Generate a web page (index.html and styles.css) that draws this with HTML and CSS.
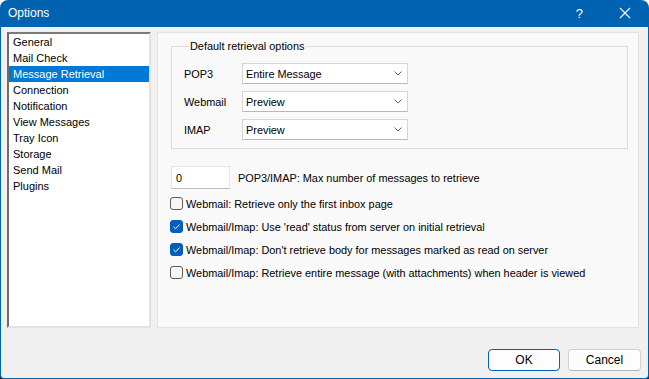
FILE: index.html
```html
<!DOCTYPE html>
<html>
<head>
<meta charset="utf-8">
<link rel="stylesheet" href="styles.css">
</head>
<body>
<div class="window">
  <div class="titlebar">
    <span class="title">Options</span>
    <div class="caption">
      <span class="help">?</span>
      <svg class="close" width="12" height="12" viewBox="0 0 12 12"><path d="M1 1L11 11M11 1L1 11" stroke="#fff" stroke-width="1.1" fill="none"/></svg>
    </div>
  </div>
  <div class="client">
    <div class="main">
      <ul class="nav">
        <li>General</li>
        <li>Mail Check</li>
        <li class="sel">Message Retrieval</li>
        <li>Connection</li>
        <li>Notification</li>
        <li>View Messages</li>
        <li>Tray Icon</li>
        <li>Storage</li>
        <li>Send Mail</li>
        <li>Plugins</li>
      </ul>
      <div class="panel">
        <fieldset class="group">
          <legend>Default retrieval options</legend>
          <div class="row"><span class="lbl">POP3</span><div class="select"><span>Entire Message</span><svg width="8" height="5" viewBox="0 0 8 5"><path d="M0.5 0.5L4 4L7.5 0.5" stroke="#606060" stroke-width="1" fill="none"/></svg></div></div>
          <div class="row"><span class="lbl">Webmail</span><div class="select"><span>Preview</span><svg width="8" height="5" viewBox="0 0 8 5"><path d="M0.5 0.5L4 4L7.5 0.5" stroke="#606060" stroke-width="1" fill="none"/></svg></div></div>
          <div class="row"><span class="lbl">IMAP</span><div class="select"><span>Preview</span><svg width="8" height="5" viewBox="0 0 8 5"><path d="M0.5 0.5L4 4L7.5 0.5" stroke="#606060" stroke-width="1" fill="none"/></svg></div></div>
        </fieldset>
        <div class="maxrow"><div class="textbox">0</div><span>POP3/IMAP: Max number of messages to retrieve</span></div>
        <div class="checks">
          <div class="check"><span class="box"></span><span>Webmail: Retrieve only the first inbox page</span></div>
          <div class="check"><span class="box on"><svg width="13" height="13" viewBox="0 0 13 13"><path d="M3.5 6.8L5.6 8.8L9.6 4.5" stroke="#fff" stroke-width="1" fill="none"/></svg></span><span>Webmail/Imap: Use 'read' status from server on initial retrieval</span></div>
          <div class="check"><span class="box on"><svg width="13" height="13" viewBox="0 0 13 13"><path d="M3.5 6.8L5.6 8.8L9.6 4.5" stroke="#fff" stroke-width="1" fill="none"/></svg></span><span>Webmail/Imap: Don't retrieve body for messages marked as read on server</span></div>
          <div class="check"><span class="box"></span><span>Webmail/Imap: Retrieve entire message (with attachments) when header is viewed</span></div>
        </div>
      </div>
    </div>
    <div class="buttons">
      <div class="btn default">OK</div>
      <div class="btn">Cancel</div>
    </div>
  </div>
</div>
</body>
</html>
```
FILE: styles.css
```css
* { box-sizing: border-box; }
html, body { margin: 0; padding: 0; }
body {
  width: 649px;
  height: 379px;
  background: linear-gradient(#ffffff 50%, #1e1e1e 50%);
  font-family: "Liberation Sans", Arial, sans-serif;
  font-size: 10.9px;
  color: #000;
  overflow: hidden;
}
.window {
  width: 649px;
  height: 379px;
  display: flex;
  flex-direction: column;
  border-radius: 8px 8px 4px 4px;
  overflow: hidden;
  background: #0063b1;
}
.titlebar {
  height: 27px;
  flex: none;
  display: flex;
  align-items: center;
  color: #fff;
  padding-left: 8px;
  padding-bottom: 1px;
}
.title { font-size: 12px; }
.caption {
  margin-left: auto;
  display: flex;
  align-items: center;
}
.help { font-size: 13px; margin-right: 36px; }
.close { margin-right: 18px; }
.client {
  flex: 1;
  margin: 0 1px 1px 1px;
  background: #f0f0f0;
  border-radius: 0 0 3px 3px;
  display: flex;
  flex-direction: column;
  padding: 5px 0 0 6px;
}
.main {
  display: flex;
  height: 296px;
  margin-right: 9px;
  gap: 6px;
}
.nav {
  list-style: none;
  margin: 0;
  padding: 0;
  width: 144px;
  background: #fff;
  border: 2px solid;
  border-color: #7a7a7a #e3e3e3 #e3e3e3 #6d6d6d;
}
.nav li {
  height: 16px;
  line-height: 16px;
  padding-left: 4px;
  font-size: 11px;
  white-space: nowrap;
}
.nav li.sel { background: #0078d7; color: #fff; }
.panel {
  flex: 1;
  background: #f9f9f9;
  border: 1px solid #e2e2e2;
  padding: 6px 10px 0 12px;
  display: flex;
  flex-direction: column;
}
.group {
  margin: 0 0 0 1px;
  border: 1px solid #dcdcdc;
  padding: 9px 0 8px 12px;
}
.group legend {
  margin-left: 4px;
  padding: 0 2px;
  line-height: 15px;
}
.row {
  display: flex;
  align-items: center;
  height: 21px;
}
.row + .row { margin-top: 7px; }
.lbl { width: 58px; }
.select {
  width: 166px;
  height: 21px;
  background: #fff;
  border: 1px solid #d5d5d5;
  border-bottom-color: #b8b8b8;
  display: flex;
  align-items: center;
  justify-content: space-between;
  padding: 0 5px 0 3px;
}
.maxrow {
  display: flex;
  align-items: center;
  margin-top: 17px;
  margin-left: 1px;
}
.textbox {
  width: 59px;
  height: 23px;
  background: #fff;
  border: 1px solid #e5e5e5;
  border-bottom-color: #bdbdbd;
  padding-left: 4px;
  display: flex;
  align-items: center;
  margin-right: 8px;
}
.checks { margin-top: 3px; }
.check {
  height: 23px;
  display: flex;
  align-items: center;
}
.box {
  width: 13px;
  height: 13px;
  border: 1px solid #5d5d5d;
  border-radius: 3px;
  background: #f7f7f7;
  margin-right: 3px;
  position: relative;
  flex: none;
}
.box.on {
  background: #005fb8;
  border-color: #005fb8;
}
.box.on svg { position: absolute; left: -1px; top: -1px; }
.buttons {
  display: flex;
  justify-content: flex-end;
  gap: 8px;
  margin-top: 21px;
  margin-right: 7px;
}
.btn {
  width: 73px;
  height: 22px;
  border: 1px solid #d0d0d0;
  border-bottom-color: #b5b5b5;
  border-radius: 4px;
  background: #fdfdfd;
  display: flex;
  align-items: center;
  justify-content: center;
  font-size: 12px;
}
.btn.default {
  border: 1px solid #005fb8;
  width: 72px;
}
```
